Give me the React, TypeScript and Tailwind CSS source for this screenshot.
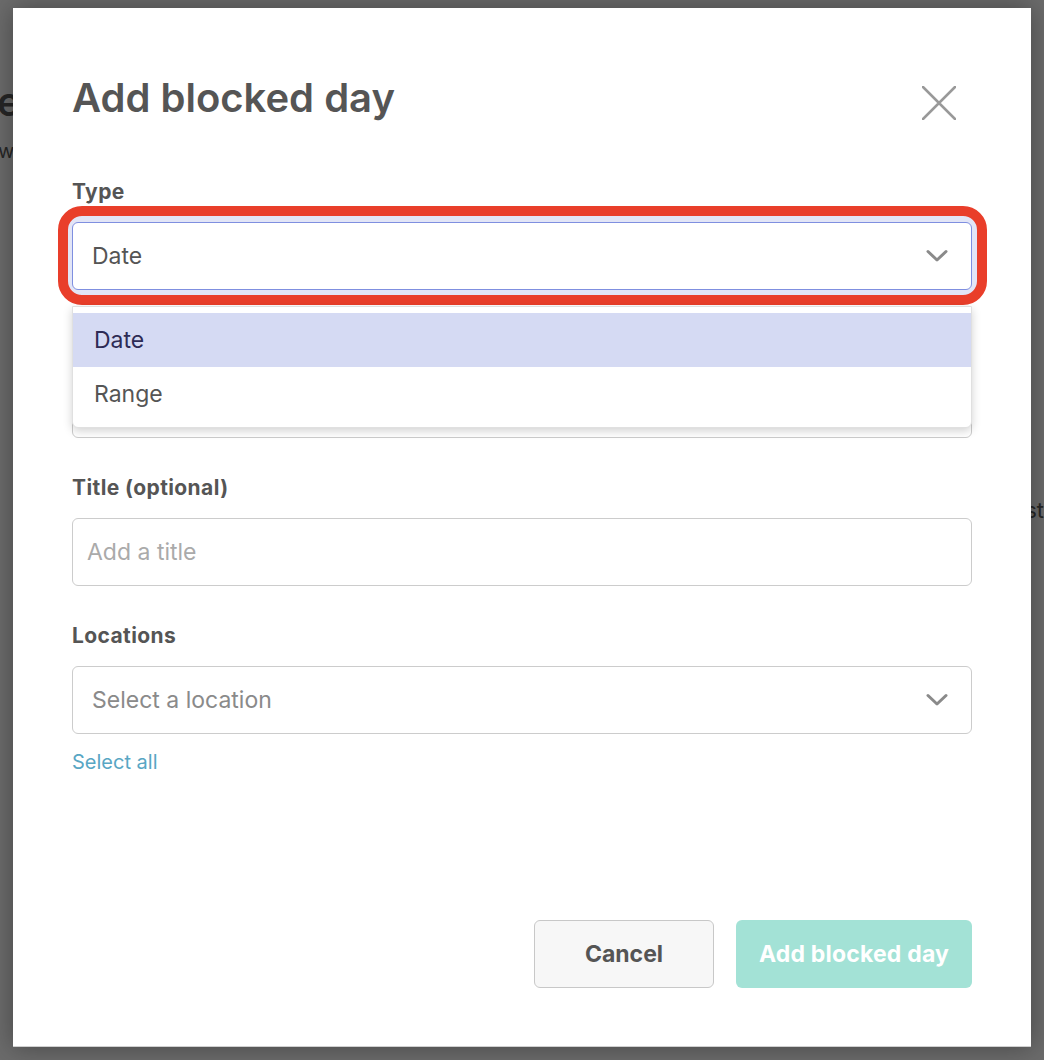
const font = { fontFamily: "Inter, 'Noto Sans', sans-serif" };

function Chevron() {
  return (
    <svg aria-hidden="true" className="h-[14px] w-[22px] text-[#8a8a8a]" viewBox="0 0 22 14" fill="none">
      <path d="M2 2.5 11 11l9-8.5" stroke="currentColor" strokeWidth="3" strokeLinecap="round" strokeLinejoin="round" />
    </svg>
  );
}

function Label({ children }: { children: React.ReactNode }) {
  return (
    <div className="mb-[18px] pt-[3px] text-[21px] font-bold leading-6 tracking-[0.4px] text-[#555]">
      {children}
    </div>
  );
}

function TypeField() {
  return (
    <div>
      <Label>Type</Label>
      <div className="relative">
        <button
          type="button"
          className="flex h-[68px] w-full items-center justify-between rounded-[6px] border border-[#7f8fe0] bg-white pl-[19px] pr-[23px] text-left text-[23px] text-[#555] shadow-[0_0_0_6px_#e2e5f6]"
        >
          <span>Date</span>
          <Chevron />
        </button>
        {/* annotation ring drawn over the screenshot */}
        <div className="pointer-events-none absolute -left-[14px] -right-[15px] -top-[16px] -bottom-[15px] rounded-[24px] border-[10px] border-[#e93e2a]" />
        <ul className="absolute left-0 right-0 top-[84px] z-10 rounded-b-[6px] border border-[#e0e0e0] bg-white py-[6px] text-[23px] shadow-[0_3px_10px_rgba(0,0,0,0.18)]">
          <li className="flex h-[54px] items-center bg-[#d5daf3] pl-[21px] text-[#2d2b55]">Date</li>
          <li className="flex h-[54px] items-center pl-[21px] text-[#555]">Range</li>
        </ul>
      </div>
    </div>
  );
}

export default function App() {
  return (
    <div className="relative h-[1060px] w-[1044px] overflow-hidden bg-[#6b6b6b]" style={font}>
      {/* page underneath the overlay */}
      <span className="absolute -left-[3px] top-[72px] text-[40px] font-semibold text-[#262626]">e</span>
      <span className="absolute -left-[2px] top-[136px] text-[20px] text-[#262626]">w</span>
      <span className="absolute right-0 top-[494px] text-[22px] text-[#262626]">st</span>

      <div className="absolute left-[13px] top-[8px] flex h-[1039px] w-[1018px] flex-col border-b border-[#d0d0d0] bg-white px-[59px] pt-[66px] pb-[58px] shadow-[0_0_24px_rgba(0,0,0,0.35)]">
        <div className="flex items-start justify-between">
          <h1 className="text-[40px] font-semibold leading-[48px] text-[#555]">Add blocked day</h1>
          <button type="button" aria-label="Close" className="mr-[16px] mt-[12px] text-[#999]">
            <svg className="h-[34px] w-[34px]" viewBox="0 0 34 34" fill="none">
              <path d="M1 1l32 32M33 1 1 33" stroke="currentColor" strokeWidth="2.5" strokeLinecap="round" />
            </svg>
          </button>
        </div>

        <div className="mt-[55px] flex flex-col gap-[35px]">
          <TypeField />

          <div>
            <Label>Date</Label>
            <div className="h-[68px] rounded-[6px] border border-[#cccccc]" />
          </div>

          <div>
            <Label>Title (optional)</Label>
            <input
              className="h-[68px] w-full rounded-[6px] border border-[#cccccc] px-[14px] text-[23px] text-[#555] outline-none placeholder:text-[#aaaaaa]"
              placeholder="Add a title"
            />
          </div>

          <div>
            <Label>Locations</Label>
            <button
              type="button"
              className="flex h-[68px] w-full items-center justify-between rounded-[6px] border border-[#cccccc] bg-white pl-[19px] pr-[23px] text-left text-[23px] text-[#8a8a8a]"
            >
              <span>Select a location</span>
              <Chevron />
            </button>
            <a href="#" className="mt-[16px] block text-[20px] leading-6 text-[#58a6c4]">
              Select all
            </a>
          </div>
        </div>

        <div className="mt-auto flex justify-end gap-[22px]">
          <button
            type="button"
            className="h-[68px] w-[180px] rounded-[6px] border border-[#c8c8c8] bg-[#f7f7f7] text-[23px] font-bold text-[#555]"
          >
            Cancel
          </button>
          <button
            type="button"
            className="h-[68px] w-[236px] rounded-[6px] bg-[#a3e2d6] text-[23px] font-bold tracking-[0.2px] text-white"
          >
            Add blocked day
          </button>
        </div>
      </div>
    </div>
  );
}
